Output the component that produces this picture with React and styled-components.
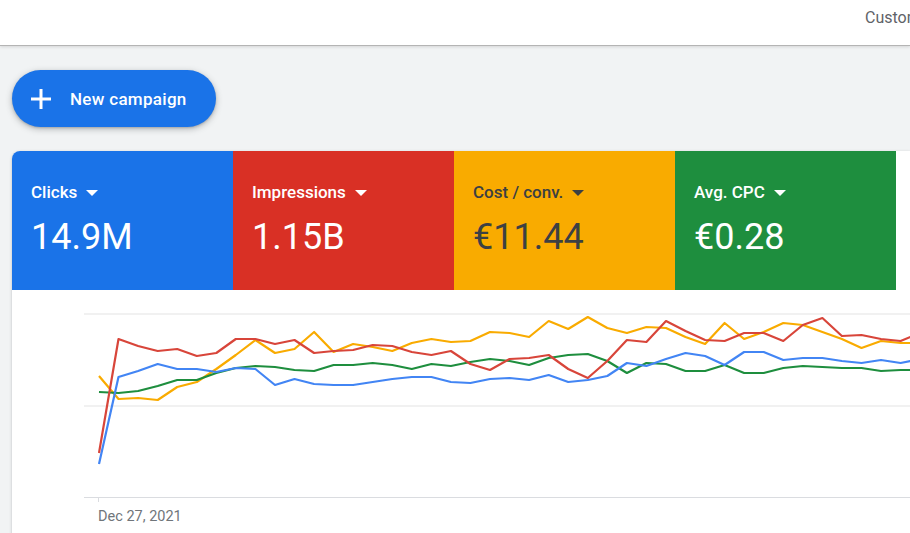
import React from "react";
import styled, { createGlobalStyle } from "styled-components";

const GlobalStyle = createGlobalStyle`
  html, body {
    margin: 0;
    padding: 0;
    background: #f1f3f4;
    font-family: Roboto, "Noto Sans", Arial, sans-serif;
    overflow: hidden;
  }
  * { box-sizing: border-box; }
`;

const Page = styled.div`
  width: 910px;
  height: 533px;
  overflow: hidden;
  background: #f1f3f4;
`;

const TopBar = styled.header`
  height: 45px;
  background: #ffffff;
  display: flex;
  align-items: center;
  padding-left: 865px;
  white-space: nowrap;
  overflow: hidden;
  box-shadow: 0 1px 0 #b4b4b4, 0 2px 3px rgba(0, 0, 0, 0.12);
  position: relative;
  z-index: 1;
`;

const TopLink = styled.span`
  font-size: 16px;
  color: #5f6368;
  flex-shrink: 0;
  padding-bottom: 11px;
`;

const Main = styled.main`
  padding: 25px 0 0 12px;
  display: flex;
  flex-direction: column;
  align-items: flex-start;
  gap: 24px;
`;

const Fab = styled.button`
  height: 57px;
  width: 204px;
  border: none;
  border-radius: 29px;
  background: #1a73e8;
  color: #ffffff;
  display: flex;
  align-items: center;
  gap: 18px;
  padding: 0 0 0 18px;
  font-family: inherit;
  font-size: 17px;
  font-weight: 500;
  letter-spacing: 0.3px;
  box-shadow: 0 2px 6px rgba(60, 64, 67, 0.35), 0 1px 2px rgba(60, 64, 67, 0.2);
  cursor: pointer;
`;

const Card = styled.section`
  width: 100%;
  background: #ffffff;
  border-radius: 8px 0 0 0;
  overflow: hidden;
  box-shadow: 0 1px 3px rgba(60, 64, 67, 0.3);
`;

const Tiles = styled.div`
  display: grid;
  grid-template-columns: repeat(4, 221px);
`;

const Tile = styled.div`
  background: ${(p) => p.$bg};
  color: ${(p) => p.$fg};
  padding: 31px 0 32px 19px;
  display: flex;
  flex-direction: column;
  gap: 14px;
`;

const TileLabel = styled.div`
  display: flex;
  align-items: center;
  gap: 9px;
  font-size: 17px;
  line-height: 20px;
  font-weight: 500;
`;

const Caret = styled.span`
  width: 0;
  height: 0;
  border-left: 6px solid transparent;
  border-right: 6px solid transparent;
  border-top: 6px solid currentColor;
  margin-top: 1px;
`;

const TileValue = styled.div`
  font-size: 36px;
  line-height: 42px;
  font-weight: 400;
`;

const ChartArea = styled.div`
  display: flex;
  flex-direction: column;
  padding-bottom: 40px;
`;

const ChartSvg = styled.svg`
  display: block;
`;

const AxisLabel = styled.div`
  padding-left: 86px;
  font-size: 14.5px;
  line-height: 16px;
  color: #70757a;
`;

const metrics = [
  { label: "Clicks", value: "14.9M", bg: "#1a73e8", fg: "#ffffff" },
  { label: "Impressions", value: "1.15B", bg: "#d93025", fg: "#ffffff" },
  { label: "Cost / conv.", value: "€11.44", bg: "#f9ab00", fg: "#3c4043" },
  { label: "Avg. CPC", value: "€0.28", bg: "#1e8e3e", fg: "#ffffff" },
];

const series = [
  {
    color: "#f9ab00",
    ys: [376, 399, 398, 400, 387, 382, 369, 355, 340, 353, 349, 332, 352, 344, 347, 351, 343, 339, 342, 341, 332, 333, 337, 321, 329, 317, 328, 333, 327, 328, 337, 344, 323, 339, 332, 323, 325, 332, 339, 348, 341, 343, 343],
  },
  {
    color: "#1e8e3e",
    ys: [392, 393, 391, 386, 380, 380, 373, 368, 366, 367, 370, 371, 365, 365, 363, 365, 369, 364, 366, 362, 359, 361, 365, 358, 355, 354, 361, 373, 363, 364, 371, 371, 365, 373, 373, 368, 366, 367, 368, 368, 371, 370, 370],
  },
  {
    color: "#4285f4",
    ys: [464, 377, 371, 364, 369, 369, 372, 368, 369, 385, 379, 384, 385, 385, 382, 379, 377, 377, 382, 383, 379, 378, 380, 375, 382, 380, 376, 363, 366, 359, 353, 356, 365, 352, 352, 360, 358, 358, 361, 363, 360, 363, 359],
  },
  {
    color: "#d8453a",
    ys: [453, 339, 346, 351, 349, 356, 353, 339, 339, 344, 340, 353, 351, 350, 345, 346, 352, 355, 351, 364, 370, 359, 358, 355, 369, 378, 361, 340, 342, 321, 331, 340, 341, 333, 333, 341, 325, 318, 336, 335, 339, 341, 333],
  },
];

const toPoints = (ys) => ys.map((y, i) => `${(99 + 19.55 * i).toFixed(1)},${y}`).join(" ");

function PlusIcon() {
  return (
    <svg width="22" height="22" viewBox="0 0 22 22">
      <path d="M11 1v20M1 11h20" stroke="#ffffff" strokeWidth="3" fill="none" />
    </svg>
  );
}

export default function App() {
  return (
    <Page>
      <GlobalStyle />
      <TopBar>
        <TopLink>Customers</TopLink>
      </TopBar>
      <Main>
        <Fab>
          <PlusIcon />
          New campaign
        </Fab>
        <Card>
          <Tiles>
            {metrics.map((m) => (
              <Tile key={m.label} $bg={m.bg} $fg={m.fg}>
                <TileLabel>
                  {m.label}
                  <Caret />
                </TileLabel>
                <TileValue>{m.value}</TileValue>
              </Tile>
            ))}
          </Tiles>
          <ChartArea>
            <ChartSvg width="898" height="219" viewBox="12 290 898 219">
              <line x1="84" y1="314" x2="910" y2="314" stroke="#e3e3e3" strokeWidth="1.2" />
              <line x1="84" y1="406" x2="910" y2="406" stroke="#e3e3e3" strokeWidth="1.2" />
              <line x1="84" y1="497.5" x2="910" y2="497.5" stroke="#dadce0" strokeWidth="1.2" />
              <line x1="98.5" y1="497" x2="98.5" y2="502" stroke="#dadce0" strokeWidth="1" />
              {series.map((s) => (
                <polyline
                  key={s.color}
                  points={toPoints(s.ys)}
                  fill="none"
                  stroke={s.color}
                  strokeWidth="2.2"
                  strokeLinejoin="round"
                />
              ))}
            </ChartSvg>
            <AxisLabel>Dec 27, 2021</AxisLabel>
          </ChartArea>
        </Card>
      </Main>
    </Page>
  );
}
